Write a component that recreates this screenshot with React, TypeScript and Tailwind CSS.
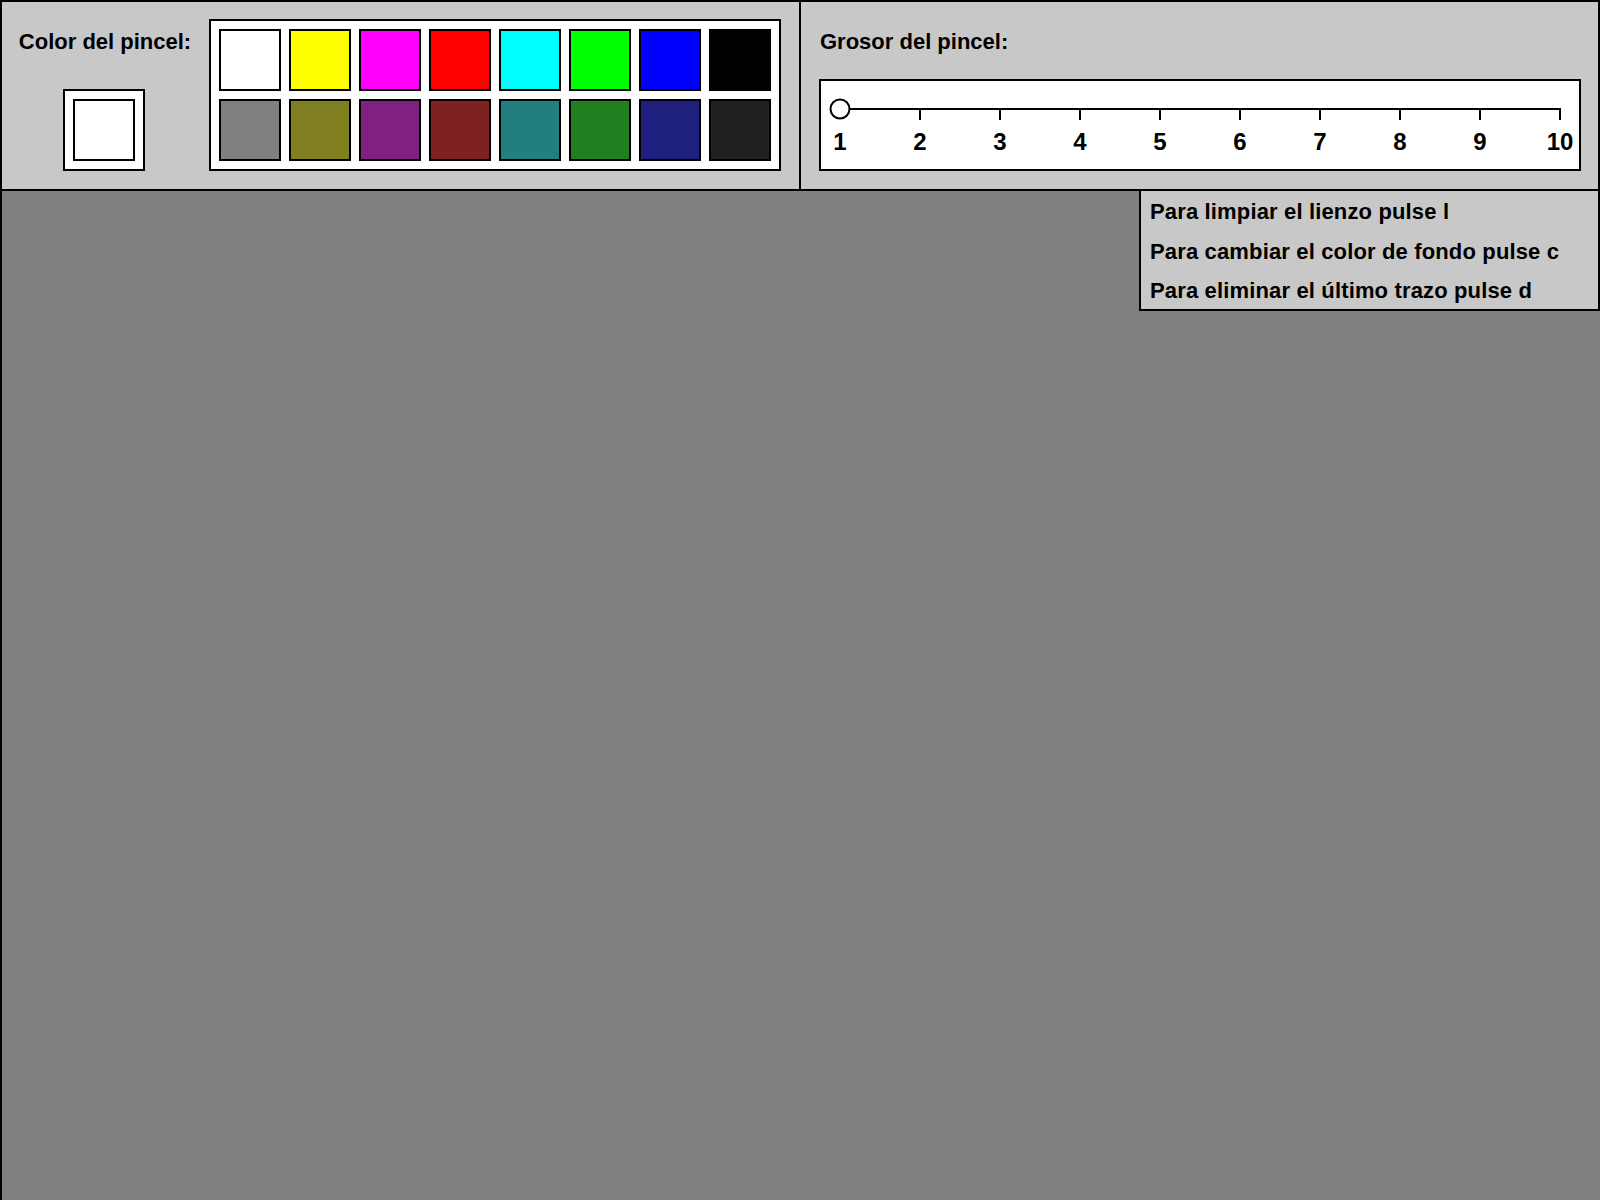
const topRow = ['#ffffff', '#ffff00', '#ff00ff', '#ff0000', '#00ffff', '#00ff00', '#0000ff', '#000000'];
const bottomRow = ['#808080', '#808020', '#802080', '#802020', '#208080', '#208020', '#202080', '#202020'];

const ticks = [1, 2, 3, 4, 5, 6, 7, 8, 9, 10];

function Swatch({ color }: { color: string }) {
  return <div className="w-[62px] h-[62px] border-2 border-black" style={{ backgroundColor: color }} />;
}

function SizeSlider() {
  // svg origin sits at the inner corner of the white box
  const x0 = 19;
  const step = 80;
  return (
    <svg width="758" height="88" viewBox="0 0 758 88">
      <line x1={x0} y1="28" x2={x0 + step * 9} y2="28" stroke="#000" strokeWidth="2" />
      {ticks.slice(1).map((n) => (
        <line key={n} x1={x0 + step * (n - 1)} y1="27" x2={x0 + step * (n - 1)} y2="39" stroke="#000" strokeWidth="2" />
      ))}
      <circle cx={x0} cy="28" r="9.5" fill="#fff" stroke="#000" strokeWidth="2" />
      {ticks.map((n) => (
        <text
          key={n}
          x={x0 + step * (n - 1)}
          y="69"
          textAnchor="middle"
          fontFamily="'Liberation Sans', Arial, sans-serif"
          fontWeight="bold"
          fontSize="24"
          fill="#000"
        >
          {n}
        </text>
      ))}
    </svg>
  );
}

export default function App() {
  return (
    <div className="w-[1600px] h-[1200px] overflow-hidden flex flex-col font-['Liberation_Sans',Arial,sans-serif] font-bold text-[22px] text-black">
      {/* Toolbar */}
      <div className="h-[191px] shrink-0 flex border-2 border-black bg-[#c8c8c8]">
        {/* Brush colour */}
        <div className="w-[799px] flex gap-[18px] pl-[17px] pt-[17px] border-r-2 border-black">
          <div className="w-[172px] flex flex-col items-center">
            <p className="mt-[12px] leading-[22px] whitespace-nowrap">Color del pincel:</p>
            <div className="mt-[36px] -ml-[2px] p-[8px] border-2 border-black bg-white">
              <Swatch color="#ffffff" />
            </div>
          </div>
          <div className="self-start flex flex-col gap-[8px] p-[8px] border-2 border-black bg-white">
            <div className="flex gap-[8px]">
              {topRow.map((c) => (
                <Swatch key={c} color={c} />
              ))}
            </div>
            <div className="flex gap-[8px]">
              {bottomRow.map((c) => (
                <Swatch key={c} color={c} />
              ))}
            </div>
          </div>
        </div>

        {/* Brush size */}
        <div className="flex-1 flex flex-col pl-[18px] pt-[29px]">
          <p className="leading-[22px] pl-[1px]">Grosor del pincel:</p>
          <div className="mt-[26px] w-[762px] h-[92px] border-2 border-black bg-white">
            <SizeSlider />
          </div>
        </div>
      </div>

      {/* Canvas */}
      <div className="relative flex-1 bg-[#808080] border-l-2 border-black">
        <div className="absolute top-0 right-0 w-[461px] h-[120px] bg-[#c8c8c8] border-l-2 border-r-2 border-b-2 border-black pl-[9px] pt-[11px] flex flex-col gap-[19.5px] tracking-[0.15px]">
          <p className="leading-[20px]">Para limpiar el lienzo pulse l</p>
          <p className="leading-[20px]">Para cambiar el color de fondo pulse c</p>
          <p className="leading-[20px]">Para eliminar el último trazo pulse d</p>
        </div>
      </div>
    </div>
  );
}
